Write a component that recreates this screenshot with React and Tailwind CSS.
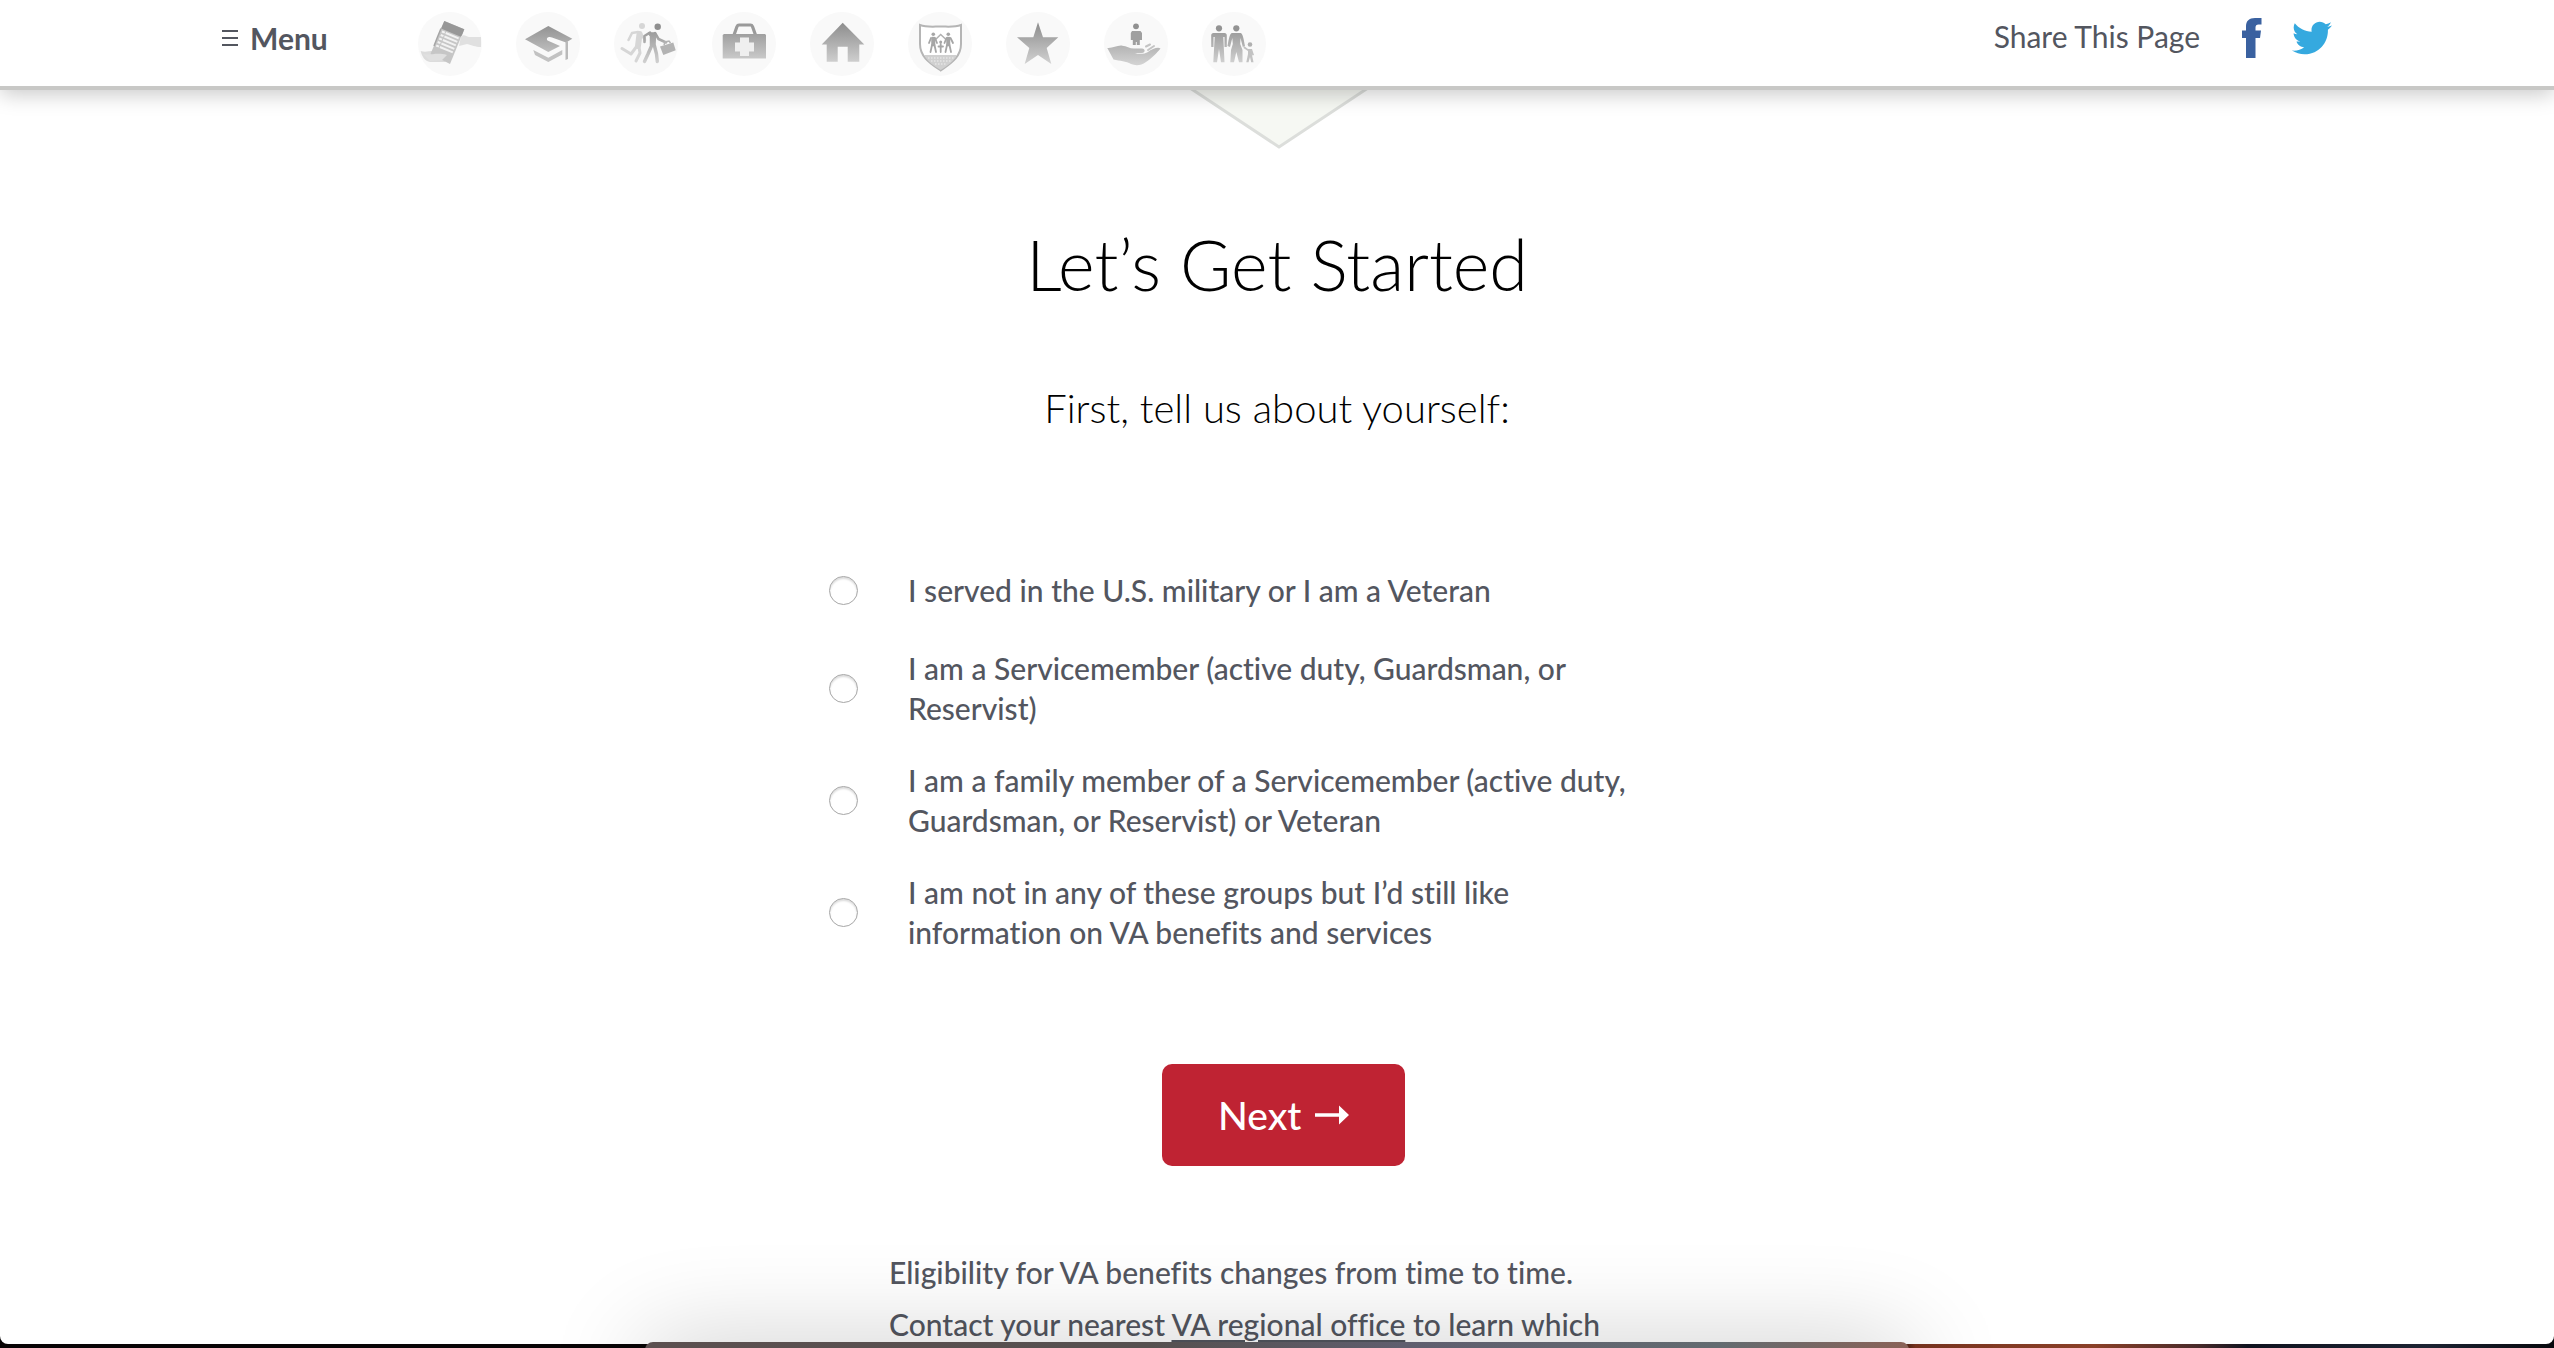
import { useState } from "react";
import { FaTwitter } from "react-icons/fa";

const fill = "url(#shade)";

const topics = [
  {
    name: "Claims",
    art: (
      <>
        <path d="M2.7 39C8 41 13 38 19 39.5L29 42L34 46L27 50H12C7 49 4 45 2.700 39Z" fill="#dcdcdc" />
        <path d="M26.300 9L46.300 17.300L32 52L12.500 42Z" fill="#c6c6c6" />
        <path d="M26.300 9L46.300 17.300L43.300 25L23 16.500Z" fill="#979797" />
        <path d="M23 16.500L19.500 25L16 34" stroke="#a5a5a5" strokeWidth="1.500" fill="none" />
        <path d="M24 19.500L41 26.500M22.700 23L39.500 30M21.200 26.500L38 33.500M19.700 30L36.500 37M18.200 33.500L35 40.500" stroke="#f2f2f2" strokeWidth="2" strokeDasharray="3 1 14 1" />
        <path d="M43 24C46 22 48 24 51 25H63V35C57 35 54 33 49 32L41 34Z" fill="#e0e0e0" />
        <path d="M5 42C12 44 18 40 29 43L24 48L12 49Z" fill="#e0e0e0" />
      </>
    ),
  },
  {
    name: "Education",
    art: (
      <>
        <path d="M32.300 14L56.300 26.700L50 30.500L36 25.500C33 24 29.500 26 31.500 28.500L44 34L32.300 40L9 27.300Z" fill={fill} />
        <path d="M49.500 30L52 29V47L49.500 48Z" fill="#b9b9b9" />
        <path d="M17.300 38L32.300 45.700L46.300 38V42.500L32.300 50L19 43Z" fill="#c2c2c2" />
      </>
    ),
  },
  {
    name: "Employment",
    art: (
      <>
        <g stroke="#d6d6d6" fill="none" strokeLinecap="round" strokeLinejoin="round">
          <circle cx="28" cy="14" r="3" fill="#d6d6d6" stroke="none" />
          <path d="M25.500 22L24 34" strokeWidth="6" />
          <path d="M24 20L18 21L14.500 28M27 22L31 28" strokeWidth="2.500" />
          <path d="M23 34L17 42L8 36.500M25 35L26 41L22 49" strokeWidth="3" />
        </g>
        <g stroke={fill} fill="none" strokeLinecap="round" strokeLinejoin="round">
          <circle cx="43.700" cy="14.700" r="3.200" fill="#8f8f8f" stroke="none" />
          <path d="M35 21.500L41 21.500L40.500 33L37 33L37 24Z" fill={fill} strokeWidth="2.500" />
          <path d="M36 20.500L30.500 24V30M41 21L44.500 27L52 30.500" strokeWidth="2.600" />
          <path d="M37.500 34L34 42L30.500 49.500M40.500 34L42.500 42L43.300 49.500" strokeWidth="3.400" />
        </g>
        <path d="M46 34.500L59.300 30.500L61.700 38.300L49.300 43Z" fill="#b3b3b3" />
        <path d="M50 33L51 30L55 29L56.500 31" stroke="#b3b3b3" strokeWidth="1.500" fill="none" />
      </>
    ),
  },
  {
    name: "Health",
    art: (
      <>
        <path d="M22 23L25 14.500C25.500 13.300 26 13 27 13H38.500C39.500 13 40 13.300 40.500 14.500L43.500 23" stroke="#9a9a9a" strokeWidth="3.200" fill="none" />
        <path d="M12 22H53L54 23V46.500H10.700V23Z" fill={fill} />
        <path d="M28 25.500H37V30.500H42V39.500H37V44H28V39.500H23V30.500H28Z" fill="#efefef" />
      </>
    ),
  },
  {
    name: "Housing",
    art: (
      <path d="M32.700 10.700L54.300 32.500H49.300V49.700H37.700V34.700H27.700V49.700H16.700V32.500H11.700Z" fill={fill} />
    ),
  },
  {
    name: "Insurance",
    art: (
      <>
        <path d="M12 13C19 15.500 25 14.500 32.700 14.500C40 14.500 46 15.500 53 13V32C53 45 43 51 32.700 58.500C22 51 12 45 12 32Z" fill="#fff" stroke="#b5b5b5" strokeWidth="2" />
        <path d="M16 43H49C45 50 39 54 32.700 58C26 54 20 50 16 43Z" fill="#d0d0d0" />
        <path d="M20 46H46M23 49H43M27 52H39" stroke="#f0f0f0" strokeWidth="1" strokeDasharray="1.500 1.500" />
        <path d="M27 28L32.700 22.500L38.500 28" stroke="#b0b0b0" strokeWidth="1.500" fill="none" />
        <g stroke="#a6a6a6" strokeWidth="1.800" fill="none" strokeLinecap="round">
          <circle cx="25.300" cy="22.300" r="1.800" fill="#a6a6a6" stroke="none" />
          <circle cx="40.300" cy="22.300" r="1.800" fill="#a6a6a6" stroke="none" />
          <circle cx="32.700" cy="30" r="1.500" fill="#a6a6a6" stroke="none" />
          <path d="M24.500 26V33M26 26V33" strokeWidth="2.500" />
          <path d="M23 26L21 31M27 26L29 31M24 33L22.500 40M26.500 33L28 40" />
          <path d="M41 26V33M39.500 26V33" strokeWidth="2.500" />
          <path d="M42.500 26L45 31M38.500 26L36.500 31M41.500 33L43 40M39 33L37.500 40M32.700 32V40M30.500 34.500H35" />
        </g>
      </>
    ),
  },
  {
    name: "Memorial",
    art: (
      <path d="M32 10.300L37 25.300H52.300L40.700 36L45.300 52L32 43L18.700 52L23.300 36L11 25.300H27.300Z" fill={fill} />
    ),
  },
  {
    name: "Support",
    art: (
      <>
        <circle cx="32" cy="14.300" r="2.900" fill="#919191" />
        <path d="M28 19H36.500L38 21V28H35.800V33H32.800V30H31.800V33H28.800V28H26.800V21Z" fill="#a0a0a0" />
        <path d="M3.300 36C9 36.500 13 33 18.300 33.700C23 34 26 37 31 36.500H38C41.500 37 41.500 40.500 38 41H31C35 42.500 41 42 44 40C48 37 54 34.500 56.500 36.500C53 41 47 47 42 50C37 53.500 32 54 27 52C22 49 16 49 9.500 47.500Z" fill={fill} />
        <path d="M42 34.500L46 32.500M44 38L50 34" stroke="#c4c4c4" strokeWidth="2" strokeLinecap="round" />
      </>
    ),
  },
  {
    name: "Family",
    art: (
      <>
        <circle cx="17" cy="16.300" r="3.100" fill="#939393" />
        <circle cx="34.300" cy="16.300" r="3.100" fill="#939393" />
        <circle cx="48" cy="32.500" r="2.300" fill="#b0b0b0" />
        <path d="M11.500 21H22.500C24 21 24.800 22 24.800 23.500V35H22.500V25H21.300L22.500 50.300H19L17 37L15 50.300H11.300L12.700 25H11.500V35H9.200V23.500C9.200 22 10 21 11.500 21Z" fill={fill} />
        <path d="M30 21H38.500C40.500 21 41.500 26 43 34L40.800 35L38.500 26L38.200 32L40.500 38V50.300H37L34.300 40L32 50.300H28.300L29 38L30.800 32L30.300 26L28 35L25.500 34C27 26 28 21 30 21Z" fill={fill} />
        <path d="M42 34L46 37H50L52 43L50.500 43.500L49.800 42L51.500 50.300H49.200L48 45L46.500 50.300H44.300L46 42V39L41.500 36Z" fill="#c2c2c2" />
      </>
    ),
  },
];

const choices = [
  "I served in the U.S. military or I am a Veteran",
  "I am a Servicemember (active duty, Guardsman, or Reservist)",
  "I am a family member of a Servicemember (active duty, Guardsman, or Reservist) or Veteran",
  "I am not in any of these groups but I’d still like information on VA benefits and services",
];

function Header() {
  return (
    <header className="relative z-10 flex h-[90px] shrink-0 items-start border-b-4 border-[#c8c8c6] bg-white px-[222px] shadow-[0_4px_20px_rgba(0,0,0,0.22)]">
      <button type="button" className="mt-5 flex h-9 w-[196px] items-center gap-3 text-[30px] leading-9 font-bold">
        <svg viewBox="0 0 16 18" className="h-[18px] w-4 shrink-0" aria-hidden="true">
          <path d="M0 2H16M0 9H16M0 16H16" stroke="currentColor" strokeWidth="2" />
        </svg>
        Menu
      </button>
      <nav aria-label="Benefit topics" className="mt-3 flex gap-[34px]">
        {topics.map((t) => (
          <a key={t.name} href="#" aria-label={t.name} className="size-16 rounded-full bg-[#f9f9f9]">
            <svg viewBox="0 0 64 64" className="size-16" fill="none" aria-hidden="true">
              {t.art}
            </svg>
          </a>
        ))}
      </nav>
      <div className="mt-[18px] ml-auto flex items-start">
        <span className="text-[30px] leading-9">Share This Page</span>
        <a href="#" aria-label="Facebook" className="ml-[42px]">
          <svg viewBox="0 0 20 40" className="h-10 w-5" aria-hidden="true">
            <path d="M19.500 0H13C7 0 4 3 4 8V12.500H0V20H4V40H13.500V20H18L19 12.500H13.500V9.500C13.500 7.500 14.500 6.500 16.500 6.500H19.500Z" fill="#3a61a0" />
          </svg>
        </a>
        <a href="#" aria-label="Twitter" className="ml-[30px]">
          <FaTwitter className="size-10 text-[#35a9df]" aria-hidden="true" />
        </a>
      </div>
    </header>
  );
}

export default function App() {
  const [choice, setChoice] = useState(null);
  return (
    <div className="relative flex h-screen flex-col overflow-hidden bg-[linear-gradient(90deg,#080405_0%,#080405_74%,#7a3520_75%,#8a4028_82%,#4a2b2a_86%,#10131f_88%,#1d2433_95%,#07080d_100%)] pb-1 font-['Lato',sans-serif] text-[#53565f] [font-variant-ligatures:none]">
      <svg className="absolute size-0" aria-hidden="true">
        <defs>
          <linearGradient id="shade" gradientUnits="userSpaceOnUse" x1="0" y1="12" x2="0" y2="52">
            <stop offset="0" stopColor="#8f8f8f" />
            <stop offset="1" stopColor="#d2d2d2" />
          </linearGradient>
        </defs>
      </svg>
      <div className="flex min-h-0 flex-1 flex-col overflow-hidden rounded-b-lg bg-white">
        <Header />
        <main className="flex flex-col items-center">
          <svg viewBox="0 0 188 64" className="-mt-1 h-16 w-[188px]" aria-hidden="true">
            <path d="M4 0L96 61L188 0" fill="#f6f8f3" stroke="#dcdedb" strokeWidth="3" />
          </svg>
          <h1 className="mt-[68px] text-[70px] leading-[92px] font-light text-black">Let’s Get Started</h1>
          <h2 className="mt-[72px] text-[40px] leading-[52px] font-light text-black">First, tell us about yourself:</h2>
          <form className="mt-[130px] flex w-full max-w-4xl flex-col" onSubmit={(e) => e.preventDefault()}>
            <fieldset aria-label="Tell us about yourself" className="flex flex-col gap-8">
              {choices.map((c, i) => (
                <label key={c} className="flex min-h-[52px] items-center gap-[50px] pr-[68px] text-[30px] leading-10 font-medium">
                  <input
                    type="radio"
                    name="who"
                    checked={choice === i}
                    onChange={() => setChoice(i)}
                    className="size-[29px] shrink-0 appearance-none rounded-full border border-[#a6a6a6] bg-white shadow-[inset_0_2px_2px_rgba(0,0,0,0.14)] checked:bg-[#53565f]"
                  />
                  {c}
                </label>
              ))}
            </fieldset>
            <button type="submit" className="mt-28 ml-[333px] flex h-[102px] items-center gap-3.5 self-start rounded-[10px] bg-[#bf2333] px-14 text-[39px] leading-[52px] font-medium text-white">
              Next
              <svg viewBox="0 0 34 20" className="h-5 w-[34px]" aria-hidden="true">
                <path d="M0 8.200H24V0.500L34 10L24 19.500V11.800H0Z" fill="currentColor" />
              </svg>
            </button>
          </form>
          <p className="mt-20 w-full max-w-[776px] text-[30px] leading-[52px] font-medium">
            Eligibility for VA benefits changes from time to time. Contact your nearest{" "}
            <a href="#" className="underline decoration-2 underline-offset-4">VA regional office</a> to learn which
          </p>
        </main>
      </div>
      <div className="pointer-events-none absolute -bottom-[74px] left-1/2 z-20 h-20 w-[1264px] -translate-x-1/2 rounded-t-lg bg-[linear-gradient(90deg,#5c5050,#55504f_40%,#5f5e6e_60%,#636b70_85%,#8a6257)] shadow-[0_0_100px_rgba(0,0,0,0.2)]" />
    </div>
  );
}
